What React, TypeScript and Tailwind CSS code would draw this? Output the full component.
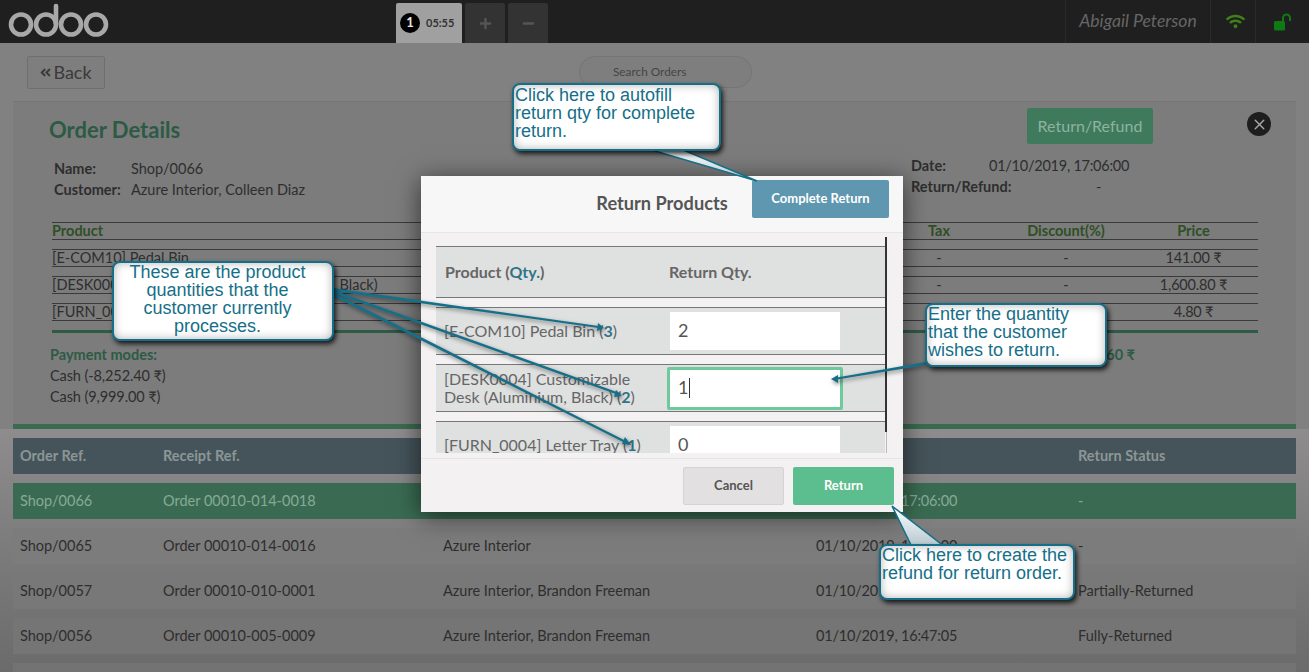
/**
 * Order return screen of the POS, with the "Return Products" popup open
 * and the tutorial callouts drawn on top. The page behind the popup is
 * painted in its dimmed colours directly.
 */
import { FaAngleDoubleLeft, FaMinus, FaPlus, FaWifi } from "react-icons/fa";
import { X } from "lucide-react";

const LINES = [
  { name: "[E-COM10] Pedal Bin", price: "141.00 ₹" },
  { name: "[DESK0004] Customizable Desk (Aluminium, Black)", price: "1,600.80 ₹" },
  { name: "[FURN_0004] Letter Tray", price: "4.80 ₹" },
];

const ORDERS = [
  { ref: "Shop/0066", receipt: "Order 00010-014-0018", customer: "Azure Interior, Colleen Diaz", date: "01/10/2019, 17:06:00", status: "-", rowClass: "bg-[#3a6b52] text-[#86aa97]" },
  { ref: "Shop/0065", receipt: "Order 00010-014-0016", customer: "Azure Interior", date: "01/10/2019, 17:00:00", status: "-", rowClass: "bg-[#7c7c7c]" },
  { ref: "Shop/0057", receipt: "Order 00010-010-0001", customer: "Azure Interior, Brandon Freeman", date: "01/10/2019, 16:50:00", status: "Partially-Returned", rowClass: "bg-[#787878]" },
  { ref: "Shop/0056", receipt: "Order 00010-005-0009", customer: "Azure Interior, Brandon Freeman", date: "01/10/2019, 16:47:05", status: "Fully-Returned", rowClass: "bg-[#757575]" },
];

export default function App() {
  return (
    <div className="relative h-[672px] w-full overflow-hidden bg-[#828181] font-['Lato','Open_Sans',sans-serif] text-[15px] text-[#2e2e2e]">
      <TopBar />

      {/* ── Search bar ─────────────────────────────────────────────────── */}
      <div className="flex h-[58px] items-start pl-[27px] pt-[13px]">
        <button className="flex h-[33px] w-[78px] items-center justify-center gap-[2px] rounded-[2px] border border-[#6f6f6f] bg-[#7f7e7e] text-[18px] text-[#3a3a3a]">
          <FaAngleDoubleLeft className="h-[13px] w-[11px]" />
          Back
        </button>
        <div className="ml-[474px] flex h-[32px] w-[173px] items-center rounded-[16px] border border-[#747474] bg-[#7e7e7e] pl-[33px] text-[11.8px] text-[#454545]">
          Search Orders
        </div>
      </div>

      <OrderDetails />
      <OrderList />

      <ReturnPopup />
      <Callouts />
    </div>
  );
}

function TopBar() {
  return (
    <div className="flex h-[43px] items-stretch bg-[#1f1f1f]">
      <svg width="110" height="43" viewBox="0 0 110 43" className="ml-[3px] shrink-0" fill="none" stroke="#a8a8a8" strokeWidth="4.6">
        <circle cx="18" cy="24.5" r="10" />
        <circle cx="43" cy="24.5" r="10" />
        <path d="M53 24V6" strokeLinecap="round" />
        <circle cx="68" cy="24.5" r="10" />
        <circle cx="93" cy="24.5" r="10" />
      </svg>

      <div className="ml-[283px] flex items-stretch gap-[3px] pt-[3px]">
        <div className="flex w-[66px] items-center gap-[6px] rounded-t-[2px] bg-[#a0a0a0] pl-[4px]">
          <span className="flex h-[20px] w-[20px] items-center justify-center rounded-full bg-black text-[13px] font-bold text-[#e8e8e8]">1</span>
          <span className="text-[11px] font-bold text-[#333333]">05:55</span>
        </div>
        <div className="flex w-[40px] items-center justify-center rounded-t-[2px] bg-[#333333] text-[#555555]">
          <FaPlus className="h-[13px] w-[13px]" />
        </div>
        <div className="flex w-[40px] items-center justify-center rounded-t-[2px] bg-[#333333] text-[#555555]">
          <FaMinus className="h-[13px] w-[13px]" />
        </div>
      </div>

      <div className="ml-auto flex items-stretch">
        <div className="flex w-[145px] items-center justify-center border-l border-[#2a2a2a] text-[17.6px] italic text-[#666666]">
          Abigail Peterson
        </div>
        <div className="flex w-[45px] items-center justify-center border-l border-[#2a2a2a] pl-[4px] text-[#3f8018]">
          <FaWifi className="h-[17px] w-[19px]" />
        </div>
        <div className="flex w-[54px] items-center justify-center border-l border-[#2a2a2a] text-[#0f7a14]">
          {/* open padlock: body low left, shackle up right */}
          <svg width="20" height="20" viewBox="0 0 20 20" fill="currentColor">
            <rect x="1" y="9" width="11" height="9.5" rx="1.5" />
            <path d="M10 9V6a3.5 3.5 0 0 1 7 0v3" fill="none" stroke="currentColor" strokeWidth="2" />
          </svg>
        </div>
      </div>
    </div>
  );
}

function OrderDetails() {
  return (
    <div className="mx-[13px] h-[328px] border-b-[5px] border-t border-b-[#3a6b52] border-t-[#757575] bg-[#7c7c7c]">
      <div className="flex h-[53px] items-start pt-[6px]">
        <div className="ml-[36px] mt-[7px] text-[22px] font-bold leading-[30px] text-[#2d5a45]">Order Details</div>
        <button className="ml-auto h-[36px] w-[126px] rounded-[2px] bg-[#3f7a5c] text-[16px] text-[#8db49f]">Return/Refund</button>
        <div className="ml-[94px] mr-[25px] mt-[4px] flex h-[24px] w-[24px] items-center justify-center rounded-full bg-[#1e1e1e] text-[#a8a8a8]">
          <X className="h-[17px] w-[17px]" strokeWidth={2} />
        </div>
      </div>

      <div className="flex h-[67px] items-start leading-[21px]">
        <div className="ml-[41px] mt-[3px] grid grid-cols-[77px_auto] text-[14.5px]">
          <span className="font-bold">Name:</span>
          <span>Shop/0066</span>
          <span className="font-bold">Customer:</span>
          <span>Azure Interior, Colleen Diaz</span>
        </div>
        <div className="ml-auto mr-[191px] grid w-[194px] grid-cols-[78px_auto] text-[14.5px]">
          <span className="font-bold">Date:</span>
          <span className="whitespace-nowrap tracking-[-0.25px]">01/10/2019, 17:06:00</span>
          <span className="whitespace-nowrap font-bold">Return/Refund:</span>
          <span className="pl-[107px]">-</span>
        </div>
      </div>

      <div className="ml-[39px] mr-[38px] flex flex-col gap-[9px] text-[14.5px] leading-[16px]">
        <div className="grid h-[18px] grid-cols-[823px_128px_126px_1fr] items-center border-y border-[#3a3a3a] font-bold text-[#2f4f25]">
          <span>Product</span>
          <span className="text-center">Tax</span>
          <span className="text-center">Discount(%)</span>
          <span className="text-center">Price</span>
        </div>
        {LINES.map((line) => (
          <div key={line.name} className="grid h-[18px] grid-cols-[823px_128px_126px_1fr] items-center border-y border-[#3a3a3a]">
            <span className="whitespace-nowrap">{line.name}</span>
            <span className="text-center">-</span>
            <span className="text-center">-</span>
            <span className="text-center tracking-[-0.2px]">{line.price}</span>
          </div>
        ))}
        <div className="h-[3px] bg-[#2f5a45]" />
      </div>

      <div className="ml-[37px] mr-[161px] mt-[11px] flex items-start justify-between text-[14.5px] leading-[21px]">
        <div>
          <div className="font-bold text-[#2d5a45]">Payment modes:</div>
          <div className="tracking-[-0.1px]">Cash (-8,252.40 ₹)</div>
          <div className="tracking-[-0.1px]">Cash (9,999.00 ₹)</div>
        </div>
        <div className="font-bold text-[#2d5a45]">60 ₹</div>
      </div>
    </div>
  );
}

function OrderList() {
  return (
    <div className="h-[243px] bg-gradient-to-b from-[#8e8c8c] to-[#6b6b6b] px-[13px] pt-[9px]">
      <div className="flex flex-col gap-[9px] text-[14.5px]">
        <div className="grid h-[36px] grid-cols-[143px_280px_373px_262px_1fr] items-center bg-[#44545a] pl-[7px] font-bold text-[#8d9696]">
          <span>Order Ref.</span>
          <span>Receipt Ref.</span>
          <span>Customer</span>
          <span>Date</span>
          <span>Return Status</span>
        </div>
        {ORDERS.map((order) => (
          <div key={order.ref} className={`grid h-[36px] grid-cols-[143px_280px_373px_262px_1fr] items-center pl-[7px] ${order.rowClass}`}>
            <span>{order.ref}</span>
            <span>{order.receipt}</span>
            <span>{order.customer}</span>
            <span className="tracking-[-0.2px]">{order.date}</span>
            <span>{order.status}</span>
          </div>
        ))}
        <div className="h-[36px] bg-[#737373]" />
      </div>
    </div>
  );
}

function QtyCell({ value, focused }: { value: string; focused?: boolean }) {
  if (focused) {
    return (
      <div className="-ml-[3px] flex h-[43px] w-[176px] items-center rounded-[2px] border-[3px] border-[#6ec99d] bg-white pb-[1px] pl-[8px] text-[18px] text-[#555555]">
        {value}
        <span className="ml-[1px] h-[20px] w-px bg-[#333333]" />
      </div>
    );
  }
  return (
    <div className="flex h-[38px] w-[170px] items-center bg-white pb-[1px] pl-[8px] text-[18px] text-[#555555]">{value}</div>
  );
}

function ReturnPopup() {
  return (
    <div className="absolute left-[421px] top-[176px] flex h-[336px] w-[482px] flex-col bg-[#f3f1f1] shadow-[0_4px_24px_rgba(0,0,0,0.6)]">
      <div className="relative flex h-[57px] shrink-0 items-center justify-center border-b border-[#e6e6e6] bg-[#f7f7f7] pb-[1px] text-[18.2px] font-bold text-[#555555]">
        Return Products
        <button className="absolute left-[331px] top-[4px] h-[38px] w-[137px] rounded-[2px] bg-[#5f97b0] text-[13px] font-bold text-white">
          Complete Return
        </button>
      </div>

      <div className="relative ml-[15px] mt-[4px] h-[216px] w-[451px] shrink-0 overflow-hidden pt-[9px] text-[16px] text-[#666666]">
        <div className="absolute right-0 top-0 h-[195px] w-[2px] bg-[#333333]" />
        <div className="absolute right-0 top-[195px] h-[21px] w-px bg-[#bbbbbb]" />
        <div className="flex flex-col gap-[9px] pr-[2px]">
          <div className="grid h-[52px] grid-cols-[224px_1fr] items-center border-y border-[#777777] bg-[#dfe0e0] pl-[9px] text-[16px] font-bold">
            <span>
              Product (<span className="text-[#2f7488]">Qty.</span>)
            </span>
            <span>Return Qty.</span>
          </div>

          <div className="grid h-[48px] grid-cols-[226px_1fr] items-center border-y border-[#777777] bg-[#dfe0e0] pl-[8px]">
            <span>
              [E-COM10] Pedal Bin (<b className="text-[#2f7488]">3</b>)
            </span>
            <QtyCell value="2" />
          </div>

          <div className="grid h-[48px] grid-cols-[226px_1fr] items-center border-y border-[#777777] bg-[#dfe0e0] pl-[8px]">
            <span className="max-w-[205px] leading-[18px]">
              [DESK0004] Customizable Desk (Aluminium, Black) (<b className="text-[#2f7488]">2</b>)
            </span>
            <QtyCell value="1" focused />
          </div>

          <div className="grid h-[48px] grid-cols-[226px_1fr] items-center border-y border-[#777777] bg-[#dfe0e0] pl-[8px]">
            <span>
              [FURN_0004] Letter Tray (<b className="text-[#2f7488]">1</b>)
            </span>
            <QtyCell value="0" />
          </div>
        </div>
      </div>

      <div className="mt-[5px] flex h-[54px] shrink-0 items-start justify-end gap-[9px] border-t border-[#e4e4e4] pr-[9px] pt-[8px] text-[13px] font-bold">
        <button className="h-[38px] w-[101px] rounded-[2px] border border-[#d4d4d4] bg-[#e2e0e0] text-[#555555]">Cancel</button>
        <button className="h-[38px] w-[101px] rounded-[2px] bg-[#5cbd8e] text-white">Return</button>
      </div>
    </div>
  );
}

function Callout({ className, children }: { className: string; children: React.ReactNode }) {
  return (
    <div
      className={`absolute rounded-[8px] border-[2px] border-[#156f89] bg-white px-[1px] font-['Liberation_Sans',Arial,sans-serif] text-[18px] leading-[18px] text-[#156f89] shadow-[2px_3px_5px_rgba(0,0,0,0.8),inset_0_0_10px_rgba(0,0,0,0.3)] ${className}`}
    >
      {children}
    </div>
  );
}

function Callouts() {
  return (
    <>
      <svg width="1309" height="672" viewBox="0 0 1309 672" className="absolute left-0 top-0">
        <defs>
          <linearGradient id="tip" x1="0" y1="0" x2="0" y2="1">
            <stop offset="0" stopColor="#ffffff" />
            <stop offset="1" stopColor="#b4c6ce" />
          </linearGradient>
        </defs>
        {/* pointers of the "autofill" and "create the refund" callouts */}
        <path d="M648 149 L681 149 L757 181 Z" fill="url(#tip)" stroke="#156f89" strokeWidth="1.5" />
        <path d="M892 506 L945 547 L912 547 Z" fill="url(#tip)" stroke="#156f89" strokeWidth="1.5" />
        {/* arrows */}
        <g fill="#156f89" className="drop-shadow-[1px_2px_2px_rgba(0,0,0,0.5)]">
          <path d="M333 288 L333 291 L602 328.5 L602 326.5 Z" />
          <path d="M333 290 L333 293 L620 395.5 L621 393.5 Z" />
          <path d="M332 292 L331 295 L629 445 L630 443 Z" />
          <path d="M926 362 L926 365 L834 380 L834 378 Z" />
          <path d="M598 323 L604 328 L597 331 Z" />
          <path d="M616 390 L622 396 L614 397 Z" />
          <path d="M625 437 L631 445 L622 444 Z" />
          <path d="M838 375 L831 379 L838 383 Z" />
        </g>
      </svg>

      <Callout className="left-[512px] top-[83px] h-[68px] w-[209px] pt-[1px]">
        Click here to autofill return qty for complete return.
      </Callout>
      <Callout className="left-[112px] top-[261px] h-[80px] w-[222px] pr-[12px] text-center">
        These are the product
        <br />
        quantities that the
        <br />
        customer currently
        <br />
        processes.
      </Callout>
      <Callout className="left-[925px] top-[303px] h-[64px] w-[182px]">
        Enter the quantity that the customer wishes to return.
      </Callout>
      <Callout className="left-[879px] top-[544px] h-[56px] w-[196px]">
        Click here to create the refund for return order.
      </Callout>
    </>
  );
}
